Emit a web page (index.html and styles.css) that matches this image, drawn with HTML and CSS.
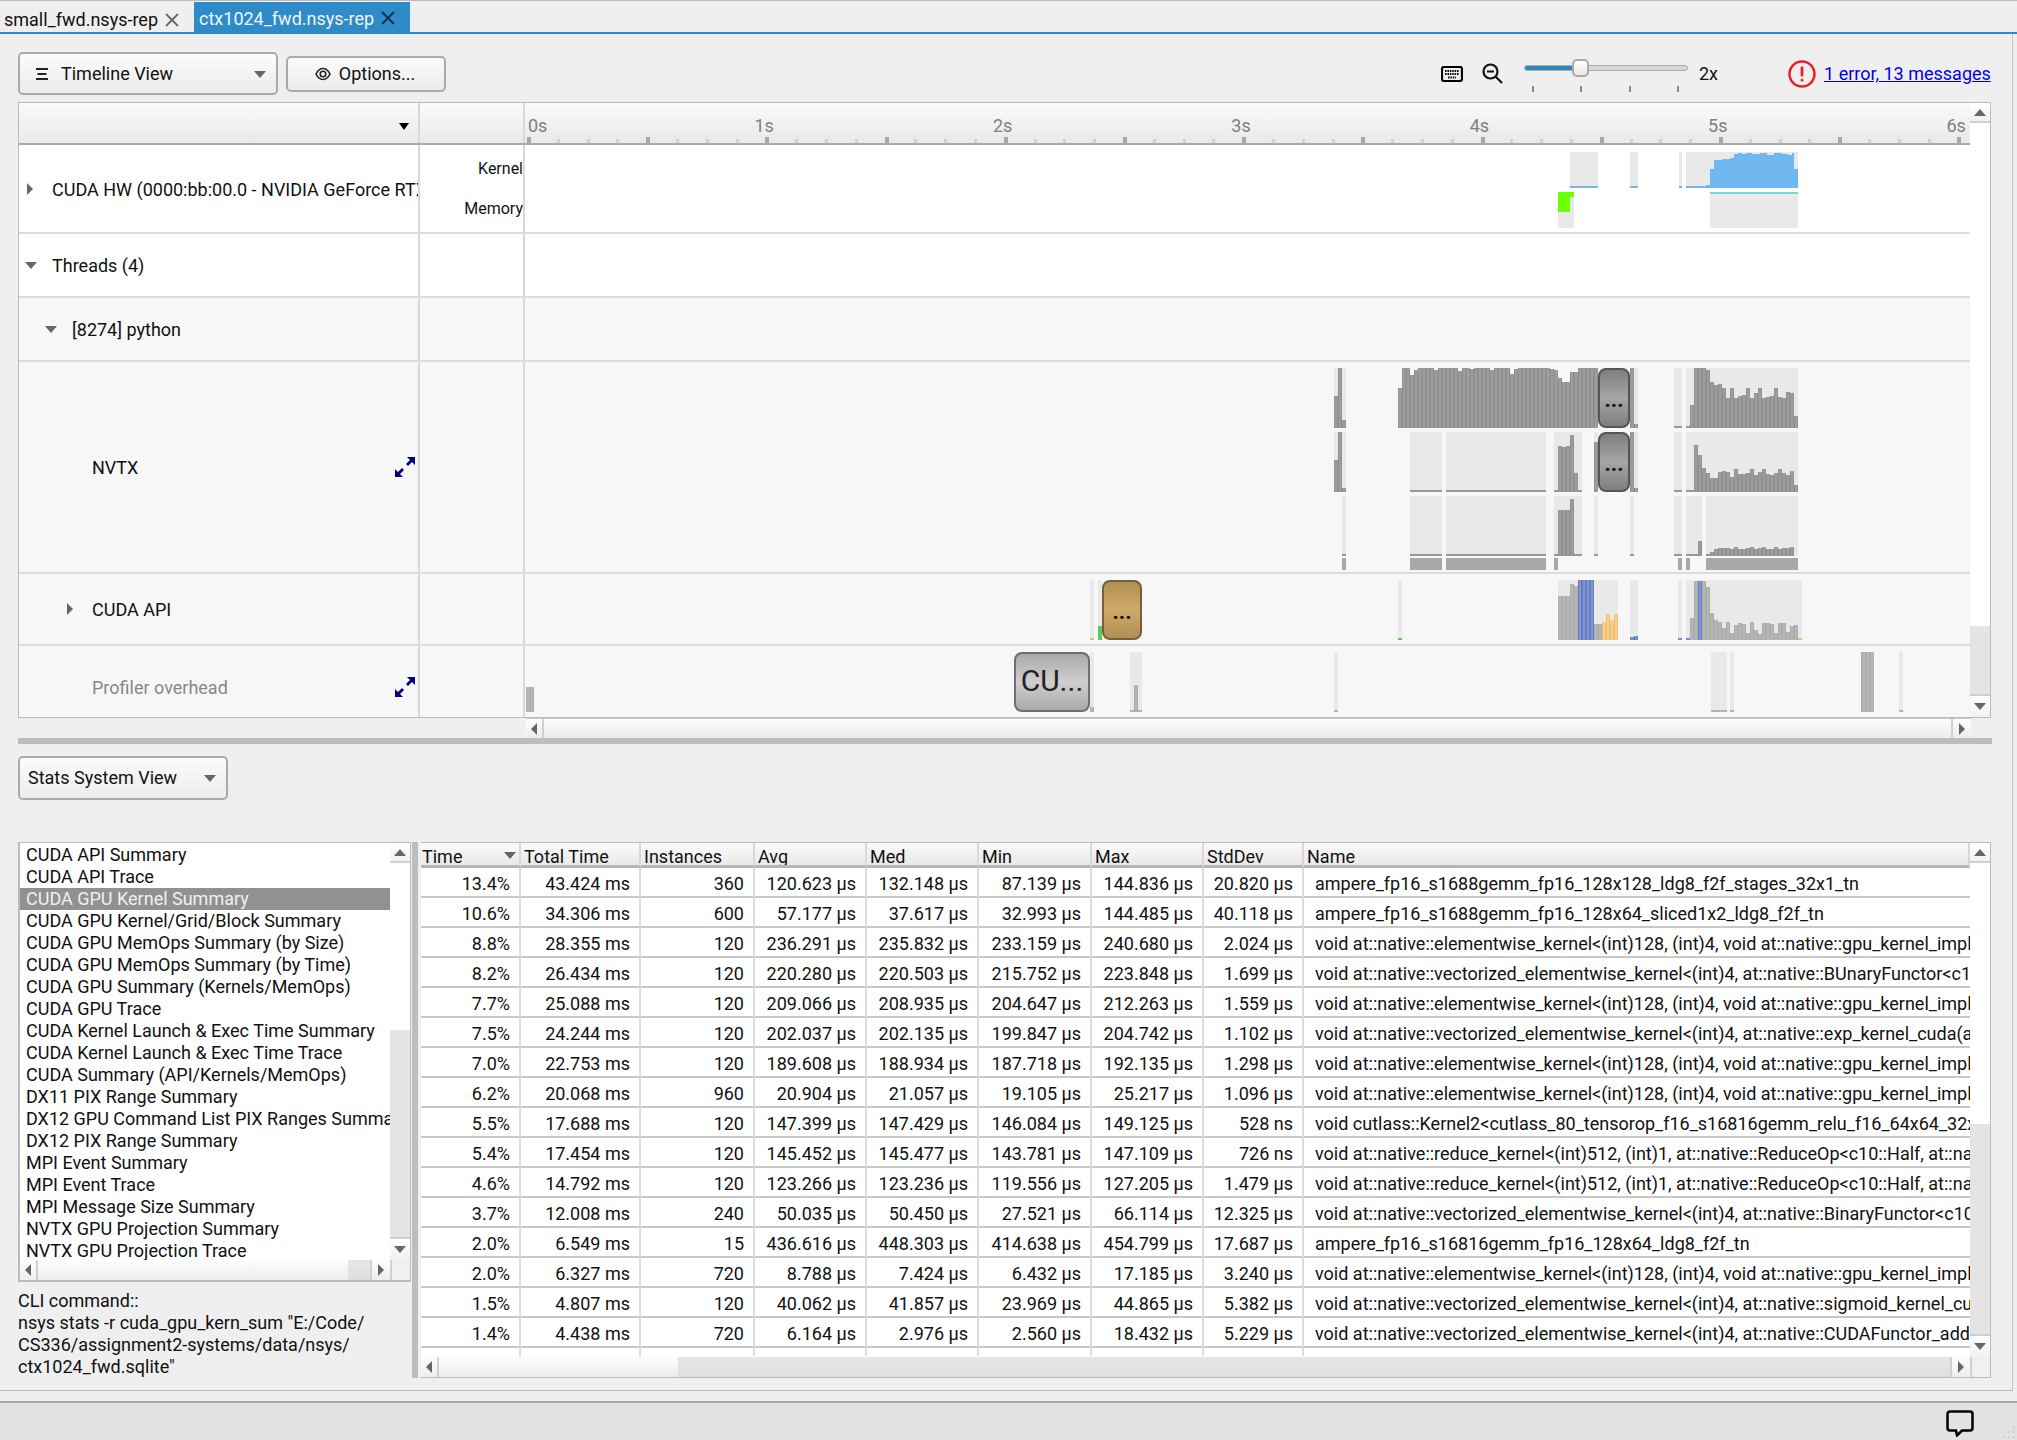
FILE: index.html
```html
<!DOCTYPE html>
<html lang="en">

<head>
    <meta charset="utf-8">
    <title>NVIDIA Nsight Systems</title>
    <link rel="stylesheet" href="styles.css">
</head>

<body>
    <div class="tabs">
        <div class="tab">small_fwd.nsys-rep
            <svg class="tab-close" viewBox="0 0 14 14"><path d="M1 1L13 13M13 1L1 13" /></svg>
        </div>
        <div class="tab tab--active">ctx1024_fwd.nsys-rep
            <svg class="tab-close" viewBox="0 0 14 14"><path d="M1 1L13 13M13 1L1 13" /></svg>
        </div>
    </div>

    <div class="workspace">
        <div class="toolbar">
            <div class="combo combo--timeline">
                <svg class="combo-icon" viewBox="0 0 14 12"><path d="M1 1H13M2.500 6H11.500M1 11H13" /></svg>
                <span class="combo-text">Timeline View</span>
                <i class="caret"></i>
            </div>
            <div class="btn-options">
                <svg class="eye" viewBox="0 0 16 16"><path d="M1 8C3 4 5.500 2.500 8 2.500S13 4 15 8C13 12 10.500 13.500 8 13.500S3 12 1 8Z" /><circle cx="8" cy="8" r="2.800" /></svg>
                Options...
            </div>
            <svg class="icon-keyboard" viewBox="0 0 22 16">
                <rect x="1" y="1" width="20" height="14" rx="2" />
                <path class="keys" d="M4 5H18M4 8H18M7 11.500H15" />
            </svg>
            <svg class="icon-zoom" viewBox="0 0 21 21">
                <circle cx="8.500" cy="8.500" r="7" />
                <path d="M5 8.500H12M13.500 13.500L20 20" />
            </svg>
            <div class="slider">
                <div class="slider-groove"><div class="slider-fill"></div></div>
                <div class="slider-thumb"></div>
                <div class="slider-ticks"><i></i><i></i><i></i><i></i></div>
            </div>
            <span class="zoom-value">2x</span>
            <svg class="icon-error" viewBox="0 0 28 28">
                <circle cx="14" cy="14" r="12.500" />
                <rect x="12.600" y="6.500" width="2.800" height="10" rx="1" />
                <rect x="12.600" y="18.800" width="2.800" height="2.800" rx="1" />
            </svg>
            <a class="messages" href="#">1 error, 13 messages</a>
        </div>

        <div class="timeline">
            <div class="timeline-main">
                <div class="row row--head">
                    <div class="cell-name"><i class="caret-black"></i></div>
                    <div class="cell-label"></div>
                    <div class="ruler">
                        <span class="ruler-first">0s</span><span>1s</span><span>2s</span><span>3s</span><span>4s</span><span>5s</span><span>6s</span>
                    </div>
                </div>
                <div class="row row--hw">
                    <div class="cell-name indent-0"><i class="tri-right"></i><span class="name-clip">CUDA HW (0000:bb:00.0 - NVIDIA GeForce RTX</span></div>
                    <div class="cell-label cell-label--stack"><span>Kernel</span><span>Memory</span></div>
                    <div class="cell-track"></div>
                </div>
                <div class="row row--group">
                    <div class="cell-name indent-0"><i class="tri-down"></i>Threads (4)</div>
                    <div class="cell-label"></div>
                    <div class="cell-track"></div>
                </div>
                <div class="row row--group row--grey">
                    <div class="cell-name indent-1"><i class="tri-down"></i>[8274] python</div>
                    <div class="cell-label"></div>
                    <div class="cell-track"></div>
                </div>
                <div class="row row--nvtx row--grey">
                    <div class="cell-name indent-2">NVTX
                        <svg class="icon-expand" viewBox="0 0 20 20"><path d="M12 0h8v8l-3-3-4 4-2-2 4-4zM8 20H0v-8l3 3 4-4 2 2-4 4z" /></svg>
                    </div>
                    <div class="cell-label"></div>
                    <div class="cell-track"></div>
                </div>
                <div class="row row--api row--grey">
                    <div class="cell-name indent-2"><i class="tri-right"></i>CUDA API</div>
                    <div class="cell-label"></div>
                    <div class="cell-track"></div>
                </div>
                <div class="row row--overhead row--grey">
                    <div class="cell-name indent-2 name-muted">Profiler overhead
                        <svg class="icon-expand" viewBox="0 0 20 20"><path d="M12 0h8v8l-3-3-4 4-2-2 4-4zM8 20H0v-8l3 3 4-4 2 2-4 4z" /></svg>
                    </div>
                    <div class="cell-label"></div>
                    <div class="cell-track"></div>
                </div>

                <!-- chart: viewBox uses page coordinates -->
                <svg class="chart" viewBox="526 145 1444 573">
                    <defs>
                        <linearGradient id="g-dark"><stop offset="0" stop-color="#8a8a8a" /><stop offset=".5" stop-color="#a4a4a4" /><stop offset="1" stop-color="#8a8a8a" /></linearGradient>
                        <linearGradient id="g-light"><stop offset="0" stop-color="#a6a6a6" /><stop offset=".5" stop-color="#bdbdbd" /><stop offset="1" stop-color="#a6a6a6" /></linearGradient>
                        <linearGradient id="g-blue"><stop offset="0" stop-color="#5a74b9" /><stop offset=".5" stop-color="#8aa0d8" /><stop offset="1" stop-color="#5a74b9" /></linearGradient>
                        <linearGradient id="g-orange"><stop offset="0" stop-color="#edb764" /><stop offset=".5" stop-color="#fad998" /><stop offset="1" stop-color="#edb764" /></linearGradient>
                        <pattern id="bars-dark" x="2" width="4" height="10" patternUnits="userSpaceOnUse"><rect width="4" height="10" fill="url(#g-dark)" /></pattern>
                        <pattern id="bars-light" x="2" width="4" height="10" patternUnits="userSpaceOnUse"><rect width="4" height="10" fill="url(#g-light)" /></pattern>
                        <pattern id="bars-blue" x="2" width="4" height="10" patternUnits="userSpaceOnUse"><rect width="4" height="10" fill="url(#g-blue)" /></pattern>
                        <pattern id="bars-orange" x="2" width="4" height="10" patternUnits="userSpaceOnUse"><rect width="4" height="10" fill="url(#g-orange)" /></pattern>
                        <linearGradient id="box-grey" x2="0" y2="1"><stop offset="0" stop-color="#7d7d7d" /><stop offset=".5" stop-color="#a6a6a6" /><stop offset="1" stop-color="#7d7d7d" /></linearGradient>
                        <linearGradient id="box-tan" x2="0" y2="1"><stop offset="0" stop-color="#ae8f55" /><stop offset=".5" stop-color="#d0a967" /><stop offset="1" stop-color="#ae8f55" /></linearGradient>
                        <linearGradient id="box-light" x2="0" y2="1"><stop offset="0" stop-color="#a8a8a8" /><stop offset=".5" stop-color="#cfcfcf" /><stop offset="1" stop-color="#a8a8a8" /></linearGradient>
                    </defs>

                    <!-- CUDA HW kernel + memory -->
                    <g class="bin">
                        <rect x="1570" y="152" width="28" height="36" />
                        <rect x="1630" y="152" width="8" height="36" />
                        <rect x="1679" y="152" width="3" height="36" />
                        <rect x="1686" y="152" width="112" height="36" />
                        <rect x="1558" y="192" width="16" height="36" />
                        <rect x="1710" y="192" width="88" height="36" />
                    </g>
                    <path class="kernel" d="M1570 186H1598V188H1570ZM1630 186H1638V188H1630ZM1679 186H1682V188H1679ZM1686 186H1706V185H1710V169H1714V160H1722V159H1730V158H1734V154H1738V153H1742V154H1746V153H1752V154H1760V153H1767V155H1774V153H1782V154H1788V155H1792V153H1794V169H1798V188H1686Z" />
                    <rect class="mem-strip" x="1710" y="192" width="88" height="2" />
                    <path class="mem-green" d="M1558 192H1574V197H1570V212H1558Z" />

                    <!-- NVTX lane 1 -->
                    <g class="bin">
                        <rect x="1334" y="368" width="12" height="60" />
                        <rect x="1630" y="368" width="8" height="60" />
                        <rect x="1674" y="368" width="8" height="60" />
                        <rect x="1686" y="368" width="112" height="60" />
                    </g>
                    <path class="dark" d="M1334 428V396H1338V368H1342V420H1346V428Z" />
                    <path class="dark" d="M1398 428V388H1402V368H1410V375H1414V370H1418V368H1434V370H1438V368H1458V371H1462V368H1470V369H1474V368H1490V370H1494V368H1510V374H1514V369H1518V368H1550V369H1554V370H1558V378H1562V382H1570V372H1578V368H1598V428Z" />
                    <path class="dark" d="M1630 428V368H1634V424H1638V428Z" />
                    <path class="dark" d="M1674 428V426H1682V428Z" />
                    <path class="dark" d="M1686 428V426H1690V405H1694V368H1706V370H1710V382H1714V385H1718V384H1722V388H1726V398H1730V388H1734V398H1738V396H1742V395H1746V388H1750V398H1754V393H1758V388H1762V398H1766V397H1770V396H1774V388H1778V397H1782V398H1786V392H1790V393H1794V416H1798V428Z" />

                    <!-- NVTX lane 2 -->
                    <g class="bin">
                        <rect x="1334" y="432" width="12" height="60" />
                        <rect x="1410" y="432" width="32" height="60" />
                        <rect x="1446" y="432" width="100" height="60" />
                        <rect x="1554" y="432" width="28" height="60" />
                        <rect x="1594" y="432" width="4" height="60" />
                        <rect x="1630" y="432" width="8" height="60" />
                        <rect x="1674" y="432" width="8" height="60" />
                        <rect x="1686" y="432" width="112" height="60" />
                    </g>
                    <path class="dark" d="M1334 492V460H1338V432H1342V488H1346V492Z" />
                    <path class="dark" d="M1410 490H1442V492H1410ZM1446 490H1546V492H1446Z" />
                    <path class="dark" d="M1554 492V490H1558V446H1562V447H1566V446H1570V435H1574V473H1578V490H1582V492Z" />
                    <path class="dark" d="M1594 492V442H1598V492Z" />
                    <path class="dark" d="M1630 492V432H1634V488H1638V492Z" />
                    <path class="dark" d="M1674 490H1682V492H1674Z" />
                    <path class="dark" d="M1686 492V490H1694V445H1698V455H1702V468H1706V473H1710V478H1714V478H1718V472H1722V471H1726V472H1730V477H1734V469H1738V474H1746V473H1750V469H1754V475H1758V472H1762V469H1766V474H1770V475H1774V473H1778V469H1782V473H1786V475H1790V471H1794V485H1798V492Z" />

                    <!-- NVTX lane 3 -->
                    <g class="bin">
                        <rect x="1342" y="496" width="4" height="60" />
                        <rect x="1410" y="496" width="32" height="60" />
                        <rect x="1446" y="496" width="100" height="60" />
                        <rect x="1554" y="496" width="28" height="60" />
                        <rect x="1594" y="496" width="4" height="60" />
                        <rect x="1630" y="496" width="4" height="60" />
                        <rect x="1674" y="496" width="8" height="60" />
                        <rect x="1686" y="496" width="16" height="60" />
                        <rect x="1706" y="496" width="92" height="60" />
                    </g>
                    <path class="dark" d="M1342 554H1346V556H1342ZM1410 554H1442V556H1410ZM1446 554H1546V556H1446ZM1594 554H1598V556H1594ZM1630 554H1634V556H1630ZM1674 554H1682V556H1674Z" />
                    <path class="dark" d="M1554 556V554H1558V510H1570V499H1574V554H1582V556Z" />
                    <path class="dark" d="M1686 556V554H1698V541H1702V556Z" />
                    <path class="dark" d="M1706 556V554H1710V552H1714V549H1718V548H1730V549H1734V547H1738V549H1746V548H1750V547H1754V549H1758V548H1762V547H1766V549H1774V547H1778V549H1782V548H1790V547H1794V556Z" />
                    <g class="solid">
                        <rect x="1342" y="558" width="4" height="12" />
                        <rect x="1410" y="558" width="32" height="12" />
                        <rect x="1446" y="558" width="100" height="12" />
                        <rect x="1554" y="558" width="4" height="12" />
                        <rect x="1678" y="558" width="4" height="12" />
                        <rect x="1686" y="558" width="4" height="12" />
                        <rect x="1706" y="558" width="92" height="12" />
                    </g>

                    <rect class="box-grey" x="1599" y="369" width="30" height="58" rx="7" />
                    <text class="box-dots" x="1614" y="407">...</text>
                    <rect class="box-grey" x="1599" y="433" width="30" height="58" rx="7" />
                    <text class="box-dots" x="1614" y="471">...</text>

                    <!-- CUDA API -->
                    <g class="bin">
                        <rect x="1090" y="580" width="4" height="60" />
                        <rect x="1098" y="580" width="4" height="60" />
                        <rect x="1398" y="580" width="4" height="60" />
                        <rect x="1558" y="580" width="60" height="60" />
                        <rect x="1630" y="580" width="8" height="60" />
                        <rect x="1678" y="580" width="4" height="60" />
                        <rect x="1686" y="580" width="116" height="60" />
                    </g>
                    <rect class="api-orange" x="1090" y="638" width="4" height="2" />
                    <rect class="api-green" x="1098" y="626" width="4" height="14" />
                    <rect class="api-green" x="1398" y="638" width="4" height="2" />
                    <path class="light" d="M1558 640V596H1570V584H1574V586H1578V640ZM1594 640V624H1602V640Z" />
                    <rect class="blue" x="1578" y="580" width="16" height="60" />
                    <path class="orange" d="M1602 640V622H1606V614H1610V620H1614V614H1618V640Z" />
                    <path class="blue" d="M1630 640V637H1634V636H1638V640ZM1678 640V638H1682V640ZM1686 640V638H1690V640Z" />
                    <path class="light" d="M1690 640V618H1694V581H1698V640ZM1702 640V581H1706V587H1710V613H1714V620H1718V622H1722V628H1726V622H1730V633H1734V625H1738V623H1742V624H1746V633H1750V622H1754V630H1758V634H1762V623H1770V624H1774V633H1778V623H1786V632H1790V626H1794V625H1798V640Z" />
                    <rect class="blue" x="1698" y="581" width="4" height="59" />
                    <rect class="api-orange" x="1798" y="638" width="4" height="2" />
                    <rect class="box-tan" x="1103" y="581" width="38" height="58" rx="7" />
                    <text class="box-dots" x="1122" y="619">...</text>

                    <!-- Profiler overhead -->
                    <g class="bin">
                        <rect x="1090" y="652" width="4" height="60" />
                        <rect x="1130" y="652" width="12" height="60" />
                        <rect x="1334" y="652" width="4" height="60" />
                        <rect x="1711" y="652" width="16" height="60" />
                        <rect x="1730" y="652" width="4" height="60" />
                        <rect x="1899" y="652" width="4" height="60" />
                    </g>
                    <path class="light" d="M526 712V687H534V712ZM1090 712V707H1094V712ZM1130 712V710H1134V685H1138V710H1142V712ZM1334 712V710H1338V712ZM1711 712V710H1727V712ZM1730 712V710H1734V712ZM1861 712V652H1874V712ZM1899 712V710H1903V712Z" />
                    <rect class="box-light" x="1015" y="653" width="74" height="58" rx="7" />
                    <text class="box-label" x="1052" y="691">CU...</text>
                </svg>
            </div>
            <div class="vbar">
                <div class="sb-btn"><i class="tri-up"></i></div>
                <div class="vbar-track"></div>
                <div class="vbar-thumb vbar-thumb--timeline"></div>
                <div class="sb-btn sb-btn--end"><i class="tri-down"></i></div>
            </div>
        </div>

        <div class="hbar hbar--timeline">
            <div class="sb-btn-h"><i class="tri-left"></i></div>
            <div class="hbar-track"></div>
            <div class="sb-btn-h sb-btn-h--end"><i class="tri-right"></i></div>
        </div>

        <div class="splitter"></div>

        <div class="stats-toolbar">
            <div class="combo combo--stats">
                <span>Stats System View</span>
                <i class="caret"></i>
            </div>
        </div>

        <div class="stats-body">
            <div class="stats-left">
                <div class="report-frame">
                    <div class="report-top">
                        <ul class="report-list">
                            <li>CUDA API Summary</li>
                            <li>CUDA API Trace</li>
                            <li class="selected">CUDA GPU Kernel Summary</li>
                            <li>CUDA GPU Kernel/Grid/Block Summary</li>
                            <li>CUDA GPU MemOps Summary (by Size)</li>
                            <li>CUDA GPU MemOps Summary (by Time)</li>
                            <li>CUDA GPU Summary (Kernels/MemOps)</li>
                            <li>CUDA GPU Trace</li>
                            <li>CUDA Kernel Launch &amp; Exec Time Summary</li>
                            <li>CUDA Kernel Launch &amp; Exec Time Trace</li>
                            <li>CUDA Summary (API/Kernels/MemOps)</li>
                            <li>DX11 PIX Range Summary</li>
                            <li>DX12 GPU Command List PIX Ranges Summary</li>
                            <li>DX12 PIX Range Summary</li>
                            <li>MPI Event Summary</li>
                            <li>MPI Event Trace</li>
                            <li>MPI Message Size Summary</li>
                            <li>NVTX GPU Projection Summary</li>
                            <li>NVTX GPU Projection Trace</li>
                        </ul>
                        <div class="vbar">
                            <div class="sb-btn"><i class="tri-up"></i></div>
                            <div class="vbar-track"></div>
                            <div class="vbar-thumb vbar-thumb--list"></div>
                            <div class="sb-btn sb-btn--end"><i class="tri-down"></i></div>
                        </div>
                    </div>
                    <div class="hbar">
                        <div class="sb-btn-h"><i class="tri-left"></i></div>
                        <div class="hbar-track"></div>
                        <div class="hbar-thumb hbar-thumb--list"></div>
                        <div class="sb-btn-h sb-btn-h--end"><i class="tri-right"></i></div>
                        <div class="sb-corner"></div>
                    </div>
                </div>
                <p class="cli">CLI command::<br>nsys stats -r cuda_gpu_kern_sum "E:/Code/<br>CS336/assignment2-systems/data/nsys/<br>ctx1024_fwd.sqlite"</p>
            </div>
            <div class="stats-split"></div>
            <div class="table-frame">
                <div class="table-top">
                    <div class="table-clip">
                        <table class="stats-table">
                            <colgroup>
                                <col class="c-time"><col class="c-total"><col class="c-inst"><col class="c-num"><col class="c-num"><col class="c-min"><col class="c-num"><col class="c-dev"><col>
                            </colgroup>
                            <thead>
                                <tr><th class="th-sorted">Time<i class="caret-small"></i></th><th>Total Time</th><th>Instances</th><th>Avg</th><th>Med</th><th>Min</th><th>Max</th><th>StdDev</th><th>Name</th></tr>
                            </thead>
                            <tbody>
                                <tr><td>13.4%</td><td>43.424 ms</td><td>360</td><td>120.623 µs</td><td>132.148 µs</td><td>87.139 µs</td><td>144.836 µs</td><td>20.820 µs</td><td>ampere_fp16_s1688gemm_fp16_128x128_ldg8_f2f_stages_32x1_tn</td></tr>
                                <tr><td>10.6%</td><td>34.306 ms</td><td>600</td><td>57.177 µs</td><td>37.617 µs</td><td>32.993 µs</td><td>144.485 µs</td><td>40.118 µs</td><td>ampere_fp16_s1688gemm_fp16_128x64_sliced1x2_ldg8_f2f_tn</td></tr>
                                <tr><td>8.8%</td><td>28.355 ms</td><td>120</td><td>236.291 µs</td><td>235.832 µs</td><td>233.159 µs</td><td>240.680 µs</td><td>2.024 µs</td><td>void at::native::elementwise_kernel&lt;(int)128, (int)4, void at::native::gpu_kernel_impl</td></tr>
                                <tr><td>8.2%</td><td>26.434 ms</td><td>120</td><td>220.280 µs</td><td>220.503 µs</td><td>215.752 µs</td><td>223.848 µs</td><td>1.699 µs</td><td>void at::native::vectorized_elementwise_kernel&lt;(int)4, at::native::BUnaryFunctor&lt;c1</td></tr>
                                <tr><td>7.7%</td><td>25.088 ms</td><td>120</td><td>209.066 µs</td><td>208.935 µs</td><td>204.647 µs</td><td>212.263 µs</td><td>1.559 µs</td><td>void at::native::elementwise_kernel&lt;(int)128, (int)4, void at::native::gpu_kernel_impl</td></tr>
                                <tr><td>7.5%</td><td>24.244 ms</td><td>120</td><td>202.037 µs</td><td>202.135 µs</td><td>199.847 µs</td><td>204.742 µs</td><td>1.102 µs</td><td>void at::native::vectorized_elementwise_kernel&lt;(int)4, at::native::exp_kernel_cuda(a</td></tr>
                                <tr><td>7.0%</td><td>22.753 ms</td><td>120</td><td>189.608 µs</td><td>188.934 µs</td><td>187.718 µs</td><td>192.135 µs</td><td>1.298 µs</td><td>void at::native::elementwise_kernel&lt;(int)128, (int)4, void at::native::gpu_kernel_impl</td></tr>
                                <tr><td>6.2%</td><td>20.068 ms</td><td>960</td><td>20.904 µs</td><td>21.057 µs</td><td>19.105 µs</td><td>25.217 µs</td><td>1.096 µs</td><td>void at::native::elementwise_kernel&lt;(int)128, (int)4, void at::native::gpu_kernel_impl</td></tr>
                                <tr><td>5.5%</td><td>17.688 ms</td><td>120</td><td>147.399 µs</td><td>147.429 µs</td><td>146.084 µs</td><td>149.125 µs</td><td>528 ns</td><td>void cutlass::Kernel2&lt;cutlass_80_tensorop_f16_s16816gemm_relu_f16_64x64_32x</td></tr>
                                <tr><td>5.4%</td><td>17.454 ms</td><td>120</td><td>145.452 µs</td><td>145.477 µs</td><td>143.781 µs</td><td>147.109 µs</td><td>726 ns</td><td>void at::native::reduce_kernel&lt;(int)512, (int)1, at::native::ReduceOp&lt;c10::Half, at::na</td></tr>
                                <tr><td>4.6%</td><td>14.792 ms</td><td>120</td><td>123.266 µs</td><td>123.236 µs</td><td>119.556 µs</td><td>127.205 µs</td><td>1.479 µs</td><td>void at::native::reduce_kernel&lt;(int)512, (int)1, at::native::ReduceOp&lt;c10::Half, at::na</td></tr>
                                <tr><td>3.7%</td><td>12.008 ms</td><td>240</td><td>50.035 µs</td><td>50.450 µs</td><td>27.521 µs</td><td>66.114 µs</td><td>12.325 µs</td><td>void at::native::vectorized_elementwise_kernel&lt;(int)4, at::native::BinaryFunctor&lt;c10</td></tr>
                                <tr><td>2.0%</td><td>6.549 ms</td><td>15</td><td>436.616 µs</td><td>448.303 µs</td><td>414.638 µs</td><td>454.799 µs</td><td>17.687 µs</td><td>ampere_fp16_s16816gemm_fp16_128x64_ldg8_f2f_tn</td></tr>
                                <tr><td>2.0%</td><td>6.327 ms</td><td>720</td><td>8.788 µs</td><td>7.424 µs</td><td>6.432 µs</td><td>17.185 µs</td><td>3.240 µs</td><td>void at::native::elementwise_kernel&lt;(int)128, (int)4, void at::native::gpu_kernel_impl</td></tr>
                                <tr><td>1.5%</td><td>4.807 ms</td><td>120</td><td>40.062 µs</td><td>41.857 µs</td><td>23.969 µs</td><td>44.865 µs</td><td>5.382 µs</td><td>void at::native::vectorized_elementwise_kernel&lt;(int)4, at::native::sigmoid_kernel_cu</td></tr>
                                <tr><td>1.4%</td><td>4.438 ms</td><td>720</td><td>6.164 µs</td><td>2.976 µs</td><td>2.560 µs</td><td>18.432 µs</td><td>5.229 µs</td><td>void at::native::vectorized_elementwise_kernel&lt;(int)4, at::native::CUDAFunctor_add</td></tr>
                                <tr class="row-cut"><td></td><td></td><td></td><td></td><td></td><td></td><td></td><td></td><td></td></tr>
                            </tbody>
                        </table>
                    </div>
                    <div class="vbar">
                        <div class="sb-btn"><i class="tri-up"></i></div>
                        <div class="vbar-track"></div>
                        <div class="vbar-thumb vbar-thumb--table"></div>
                        <div class="sb-btn sb-btn--end"><i class="tri-down"></i></div>
                    </div>
                </div>
                <div class="hbar">
                    <div class="sb-btn-h"><i class="tri-left"></i></div>
                    <div class="hbar-track hbar-track--table"></div>
                    <div class="hbar-thumb hbar-thumb--table"></div>
                    <div class="sb-btn-h sb-btn-h--end"><i class="tri-right"></i></div>
                    <div class="sb-corner"></div>
                </div>
            </div>
        </div>
    </div>

    <div class="statusbar">
        <svg class="icon-chat" viewBox="0 0 28 27"><path d="M4 1.500H24A2.500 2.500 0 0 1 26.500 4V18A2.500 2.500 0 0 1 24 20.500H16L11 25.500L10 20.500H4A2.500 2.500 0 0 1 1.500 18V4A2.500 2.500 0 0 1 4 1.500Z" /></svg>
        <svg class="grip" viewBox="0 0 16 16"><path d="M12 2h2v2h-2zM7 7h2v2H7zM12 7h2v2h-2zM2 12h2v2H2zM7 12h2v2H7zM12 12h2v2h-2z" /></svg>
    </div>
</body>

</html>
```

FILE: styles.css
```css
html {
    box-sizing: border-box;
    height: 100%;
}

*,
*:before,
*:after {
    box-sizing: inherit;
}

body {
    background: #efefef;
    color: #111;
    display: flex;
    flex-direction: column;
    font-family: Roboto, "Liberation Sans", sans-serif;
    font-size: 18px;
    height: 100vh;
    margin: 0;
    overflow: hidden;
}

/* tabs */
.tabs {
    align-items: flex-end;
    border-bottom: 2px solid #2e8bc8;
    border-top: 1px solid #bbb;
    display: flex;
    flex: none;
    height: 34px;
}

.tab {
    align-items: center;
    display: flex;
    height: 31px;
    padding: 6px 15px 0 4px;
    white-space: nowrap;
}

.tab--active {
    background: #2e8bc8;
    color: #eef6fc;
    height: 30px;
    padding: 2px 15px 0 5px;
}

.tab-close {
    fill: none;
    height: 14px;
    margin-left: 7px;
    stroke: #666;
    stroke-width: 1.8;
    width: 14px;
}

.tab--active .tab-close {
    stroke: #12304a;
}

/* workspace */
.workspace {
    border-bottom: 1px solid #bbb;
    border-right: 1px solid #c4c4c4;
    flex: none;
    height: 1357px;
    padding: 0 21px 0 18px;
    width: 2013px;
}

.toolbar {
    align-items: center;
    display: flex;
    height: 68px;
    padding-top: 11px;
}

.combo {
    align-items: center;
    background: linear-gradient(#fbfbfb, #ececec);
    border: 2px solid #aaa;
    border-radius: 5px;
    display: flex;
    height: 43px;
    position: relative;
}

.combo--timeline {
    padding-left: 15px;
    width: 260px;
}

.combo-icon {
    fill: none;
    height: 12px;
    margin-right: 12px;
    stroke: #222;
    stroke-width: 2;
    width: 14px;
}

.caret {
    border-left: 6px solid transparent;
    border-right: 6px solid transparent;
    border-top: 7px solid #666;
    position: absolute;
    right: 10px;
    top: 17px;
}

.btn-options {
    align-items: center;
    background: linear-gradient(#fbfbfb, #ececec);
    border: 2px solid #aaa;
    border-radius: 5px;
    display: flex;
    height: 36px;
    justify-content: center;
    margin-left: 8px;
    padding-right: 2px;
    width: 160px;
}

.eye {
    fill: none;
    height: 16px;
    margin-right: 8px;
    stroke: #222;
    stroke-width: 1.600;
    width: 16px;
}

.icon-keyboard {
    flex: none;
    height: 16px;
    margin-left: 995px;
    width: 22px;
}

.icon-keyboard rect {
    fill: none;
    stroke: #000;
    stroke-width: 2.200;
}

.icon-keyboard .keys {
    fill: none;
    stroke: #111;
    stroke-dasharray: 1.600 .8;
    stroke-width: 2;
}

.icon-zoom {
    fill: none;
    flex: none;
    height: 21px;
    margin-left: 19px;
    stroke: #111;
    stroke-width: 2.200;
    width: 21px;
}

.slider {
    flex: none;
    height: 36px;
    margin-left: 21px;
    margin-top: 6px;
    position: relative;
    width: 164px;
}

.slider-groove {
    background: #d6d6d6;
    border: 1px solid #aaa;
    border-radius: 3px;
    height: 6px;
    margin-top: 6px;
    overflow: hidden;
}

.slider-fill {
    background: #2f85c4;
    height: 100%;
    width: 55px;
}

.slider-thumb {
    background: linear-gradient(#fff, #e8e8e8);
    border: 2px solid #aaa;
    border-radius: 5px;
    height: 18px;
    left: 48px;
    position: absolute;
    top: 0;
    width: 17px;
}

.slider-ticks {
    display: flex;
    justify-content: space-between;
    margin-top: 15px;
    padding: 0 9px 0 8px;
}

.slider-ticks i {
    background: #888;
    height: 6px;
    width: 2px;
}

.zoom-value {
    margin-left: 11px;
}

.icon-error {
    fill: #e8212a;
    flex: none;
    height: 28px;
    margin-left: 70px;
    width: 28px;
}

.icon-error circle {
    fill: none;
    stroke: #e8212a;
    stroke-width: 2.500;
}

.messages {
    color: #0000ee;
    margin-left: 8px;
    white-space: nowrap;
}

/* timeline */
.timeline {
    background: #fff;
    border: 1px solid #bbb;
    display: flex;
    height: 616px;
}

.timeline-main {
    flex: 1;
    min-width: 0;
    position: relative;
}

.row {
    border-bottom: 2px solid #dcdcdc;
    display: flex;
}

.row--head {
    background: linear-gradient(#fafafa, #e9e9e9);
    border-bottom: 2px solid #aaa;
    height: 42px;
}

.row--hw {
    height: 89px;
}

.row--group {
    height: 64px;
}

.row--nvtx {
    height: 212px;
}

.row--api {
    height: 72px;
}

.row--overhead {
    border-bottom: 0;
    height: 71px;
}

.row--grey {
    background: #f7f7f7;
}

.cell-name {
    align-items: center;
    border-right: 2px solid #d8d8d8;
    display: flex;
    flex: none;
    position: relative;
    white-space: nowrap;
    width: 401px;
}

.indent-0 {
    padding-left: 33px;
}

.indent-1 {
    padding-left: 53px;
}

.indent-2 {
    padding-left: 73px;
}

.name-clip {
    margin-top: 1px;
    overflow: hidden;
}

.name-muted {
    color: #888;
    padding-top: 11px;
}

.cell-name > .tri-down {
    left: -27px;
    margin-right: -12px;
    position: relative;
}

.cell-name > .tri-right {
    left: -25px;
    margin-right: -6px;
    position: relative;
}

.cell-label {
    border-right: 2px solid #d8d8d8;
    flex: none;
    width: 105px;
}

.cell-label--stack {
    display: flex;
    flex-direction: column;
    font-size: 16px;
    justify-content: center;
    row-gap: 21px;
    text-align: right;
}

.cell-track {
    flex: 1;
}

.caret-black {
    border-left: 5px solid transparent;
    border-right: 5px solid transparent;
    border-top: 7px solid #000;
    position: absolute;
    right: 9px;
    top: 20px;
}

.ruler {
    background-image: repeating-linear-gradient(90deg, transparent 0 2px, #a8a8a8 2px 6px, transparent 6px 119.200px), repeating-linear-gradient(90deg, transparent 0 2px, #d2d2d2 2px 5px, transparent 5px 29.800px);
    background-position: left bottom, left bottom;
    background-repeat: no-repeat;
    background-size: 100% 6px, 100% 4px;
    color: #808080;
    display: flex;
    flex: 1;
    overflow: hidden;
    padding-top: 12px;
}

.ruler span {
    flex: none;
    text-align: center;
    width: 238.400px;
}

.ruler .ruler-first {
    padding-left: 3px;
    text-align: left;
    width: 120px;
}

.icon-expand {
    fill: #000080;
    height: 20px;
    position: absolute;
    right: 3px;
    width: 20px;
}

.chart {
    height: 573px;
    left: 507px;
    pointer-events: none;
    position: absolute;
    top: 42px;
    width: 1444px;
}

.bin rect {
    fill: #e9e9e9;
}

.kernel {
    fill: #72b8f0;
}

.mem-strip {
    fill: #78d6e2;
}

.mem-green {
    fill: #6cff00;
}

.dark {
    fill: url(#bars-dark);
}

.light {
    fill: url(#bars-light);
}

.blue {
    fill: url(#bars-blue);
}

.orange {
    fill: url(#bars-orange);
}

.solid rect {
    fill: #a8a8a8;
}

.api-orange {
    fill: #eebb77;
}

.api-green {
    fill: #5cc95c;
}

.box-grey {
    fill: url(#box-grey);
    stroke: #555;
    stroke-width: 2;
}

.box-tan {
    fill: url(#box-tan);
    stroke: #7a5f35;
    stroke-width: 2;
}

.box-light {
    fill: url(#box-light);
    stroke: #6e6e6e;
    stroke-width: 2;
}

.box-dots {
    fill: #111;
    font-size: 22px;
    font-weight: 700;
    text-anchor: middle;
}

.box-label {
    fill: #222;
    font-size: 30px;
    text-anchor: middle;
}

/* scrollbars */
.vbar {
    background: #fff;
    display: flex;
    flex: none;
    flex-direction: column;
    width: 20px;
}

.sb-btn {
    align-items: center;
    background: linear-gradient(#fff, #f1f1f1);
    border-bottom: 2px solid #d0d0d0;
    display: flex;
    flex: none;
    height: 20px;
    justify-content: center;
}

.sb-btn--end {
    border-bottom: 0;
    border-top: 2px solid #d0d0d0;
    height: 23px;
}

.vbar-track {
    flex: 1;
}

.vbar-thumb {
    background: #e4e4e4;
    flex: none;
}

.vbar-thumb--timeline {
    height: 68px;
}

.vbar-thumb--list {
    height: 207px;
}

.vbar-thumb--table {
    height: 210px;
}

.tri-up,
.tri-down {
    border-left: 6px solid transparent;
    border-right: 6px solid transparent;
    display: block;
    flex: none;
}

.tri-up {
    border-bottom: 7px solid #666;
}

.tri-down {
    border-top: 7px solid #666;
}

.tri-left,
.tri-right {
    border-bottom: 6px solid transparent;
    border-top: 6px solid transparent;
    display: block;
    flex: none;
}

.tri-left {
    border-right: 6px solid #666;
}

.tri-right {
    border-left: 6px solid #666;
}

.hbar {
    background: linear-gradient(#fdfdfd, #ededed);
    display: flex;
    flex: none;
    height: 20px;
}

.hbar--timeline {
    border-top: 1px solid #c8c8c8;
    margin: 0 20px 0 508px;
}

.sb-btn-h {
    align-items: center;
    border-right: 2px solid #d0d0d0;
    display: flex;
    flex: none;
    justify-content: center;
    width: 18px;
}

.sb-btn-h--end {
    border-left: 2px solid #d0d0d0;
    border-right: 0;
    width: 20px;
}

.hbar-track {
    flex: 1;
}

.hbar-thumb {
    background: linear-gradient(#e6e6e6, #dedede);
    flex: none;
}

.hbar-thumb--list {
    width: 22px;
}

.hbar-thumb--table {
    width: 1272px;
}

.hbar-track--table {
    flex: none;
    width: 239px;
}

.sb-corner {
    background: #f0f0f0;
    border-left: 2px solid #d0d0d0;
    flex: none;
    width: 20px;
}

.splitter {
    background: #bdbdbd;
    height: 6px;
    margin-right: -1px;
}

/* stats */
.stats-toolbar {
    height: 98px;
    padding-top: 12px;
}

.combo--stats {
    height: 44px;
    padding: 0 0 1px 8px;
    width: 210px;
}

.stats-body {
    display: grid;
    grid-template-columns: 393px 10px 1570px;
    height: 536px;
}

.report-frame {
    background: #fff;
    border: 2px solid #bbb;
    border-right-width: 1px;
    border-top-width: 1px;
}

.report-top {
    display: flex;
    height: 417px;
}

.report-list {
    flex: 1;
    list-style: none;
    margin: 0;
    min-width: 0;
    overflow: hidden;
    padding: 1px 0 0;
}

.report-list li {
    height: 22px;
    line-height: 22px;
    overflow: hidden;
    padding-left: 6px;
    white-space: nowrap;
}

.report-list .selected {
    background: #919191;
    color: #f0f0f0;
}

.cli {
    line-height: 22px;
    margin: 8px 0 0;
}

.stats-split {
    background: linear-gradient(90deg, #efefef 1px, #bdbdbd 1px, #bdbdbd 7px, #efefef 7px);
}

.table-frame {
    background: #fff;
    border: 1px solid #bbb;
    border-left: 0;
    display: flex;
    flex-direction: column;
    height: 536px;
}

.table-top {
    display: flex;
    height: 514px;
}

.table-clip {
    flex: 1;
    min-width: 0;
    overflow: hidden;
}

.stats-table {
    border-collapse: separate;
    border-spacing: 0;
    table-layout: fixed;
    width: 1549px;
}

.c-time {
    width: 100px;
}

.c-total {
    width: 120px;
}

.c-inst {
    width: 114px;
}

.c-num {
    width: 112px;
}

.c-min {
    width: 113px;
}

.c-dev {
    width: 100px;
}

.stats-table th {
    background: linear-gradient(#fafafa, #e9e9e9);
    border-bottom: 3px solid #b5b5b5;
    border-right: 2px solid #d8d8d8;
    font-weight: 400;
    height: 25px;
    line-height: 17px;
    overflow: hidden;
    padding: 5px 0 0 3px;
    position: relative;
    text-align: left;
}

.stats-table .th-sorted {
    padding-left: 1px;
}

.stats-table td {
    border-bottom: 2px solid #c8c8c8;
    border-right: 2px solid #dcdcdc;
    height: 30px;
    overflow: hidden;
    padding: 2px 9px 0 0;
    text-align: right;
    white-space: nowrap;
}

.stats-table td:last-child {
    border-right: 0;
    padding: 2px 0 0 11px;
    text-align: left;
}

.stats-table .row-cut td {
    border-bottom: 0;
    height: 8px;
    padding: 0;
}

.caret-small {
    border-left: 6px solid transparent;
    border-right: 6px solid transparent;
    border-top: 7px solid #666;
    position: absolute;
    right: 3px;
    top: 9px;
}

/* status */
.statusbar {
    align-items: flex-end;
    background: #e2e2e2;
    border-top: 2px solid #aaa;
    display: flex;
    flex: 1;
    justify-content: flex-end;
    margin-top: 10px;
}

.icon-chat {
    fill: none;
    height: 27px;
    margin-bottom: 3px;
    stroke: #000;
    stroke-width: 2.500;
    width: 28px;
}

.grip {
    fill: #cfcfcf;
    height: 16px;
    margin-left: 27px;
    width: 16px;
}
```
